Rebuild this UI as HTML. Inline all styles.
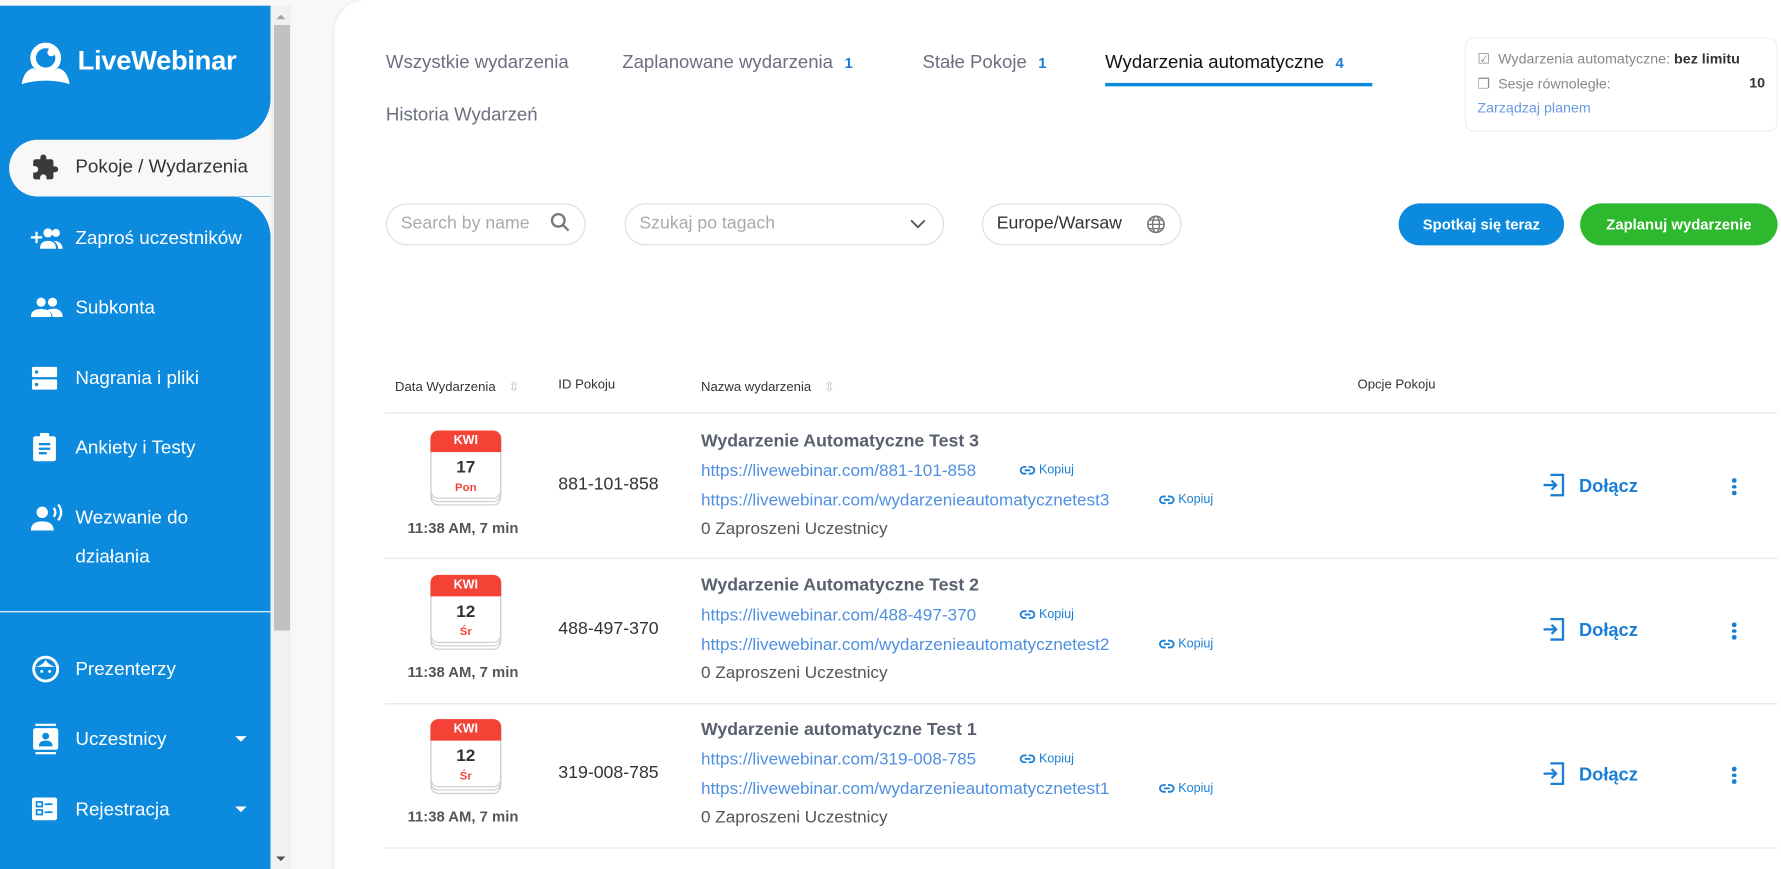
<!DOCTYPE html>
<html><head><meta charset="utf-8"><style>
*{box-sizing:border-box;margin:0;padding:0;white-space:nowrap}
html,body{width:1781px;height:869px;overflow:hidden;background:#f8f8f8;font-family:"Liberation Sans",sans-serif}
#w{position:absolute;left:0;top:0;width:1560px;height:765px;transform:scale(1.1417,1.136);transform-origin:0 0;background:#f8f8f8}
.a{position:absolute}
.sb{position:absolute;left:0;top:5px;width:237px;height:760px;background:#0b8ade}
.ni{position:absolute;left:66px;color:#fff;font-size:16.5px}
.ic{position:absolute;left:27px}
.tab{position:absolute;top:46px;font-size:16.3px;color:#6b6f80}
.cnt{color:#1a7fd4;font-size:13px;font-weight:bold;margin-left:10px}
.pill{position:absolute;top:179px;height:37px;border:1px solid #ddd;border-radius:19px;background:#fff;font-size:15.5px;color:#aaa;padding:8px 12px}
.btn{position:absolute;top:179px;height:37px;border-radius:19px;color:#fff;font-weight:bold;font-size:13px;text-align:center;line-height:37px}
.th{position:absolute;top:333px;font-size:11.5px;color:#333}
.hr{position:absolute;left:337px;width:1220px;height:1px;background:#e6e6e6}
.row{position:absolute;left:0;width:1560px;height:127px}
.cal{position:absolute;left:377px;top:379px;width:62px;height:66px}
.cal .p{position:absolute;left:0;width:62px;height:60px;border:1px solid #ccc;border-radius:7px;background:#fff}
.cal .h{position:absolute;left:0;top:0;width:62px;height:19px;background:#f44336;border-radius:7px 7px 0 0;color:#fff;font-size:11px;font-weight:bold;text-align:center;line-height:19px}
.cal .d{position:absolute;top:24px;width:62px;text-align:center;font-size:15px;font-weight:bold;color:#333}
.cal .wd{position:absolute;top:45px;width:62px;text-align:center;font-size:10px;font-weight:bold;color:#f44336}
.tm{position:absolute;left:357px;top:457px;font-size:13px;font-weight:bold;color:#555}
.id{position:absolute;left:489px;top:418px;font-size:15.5px;color:#333}
.nm{position:absolute;left:614px;top:380px;font-size:15.5px;font-weight:bold;color:#5a6070}
.ln{position:absolute;left:614px;font-size:15px;color:#4f8fe0}
.kp{position:absolute;font-size:11px;color:#1a7fd4}
.kp svg{vertical-align:-2px;margin-right:3px}
.inv{position:absolute;left:614px;top:457px;font-size:15px;color:#555}
.dj{position:absolute;left:1350px;top:416px;font-size:16px;font-weight:bold;color:#1a7fd4}
.dj svg{vertical-align:-5px;margin-right:11px}
.kb{position:absolute;left:1517px;top:421px;width:4px}
.kb i{display:block;width:3.5px;height:3.5px;border-radius:50%;background:#1a7fd4;margin-bottom:2px}
</style></head><body><div id="w">
<div class="sb"></div>
<div class="a" style="left:8px;top:123px;width:200px;height:50px;background:#f8f8f8;border-radius:25px 0 0 25px"></div>
<svg class="a" style="left:190px;top:85px" width="48" height="126" viewBox="0 0 48 126"><path fill="#f8f8f8" d="M0 38H48V88H0Z M10 38.5A37 37 0 0 0 47 1.5L48 1.5L48 38.5Z M10 87.5A37 37 0 0 1 47 124.5L48 124.5L48 87.5Z"/></svg>
<svg class="a" style="left:17px;top:36px" width="52" height="40" viewBox="0 0 52 40"><circle cx="23" cy="15" r="11" fill="none" stroke="#fff" stroke-width="5"/><circle cx="28" cy="10" r="3.5" fill="#fff"/><path d="M2 38 Q4 26 12 24 Q23 32 34 24 Q42 26 44 38 Q23 32 2 38Z" fill="#fff"/></svg>
<div class="a" style="left:68px;top:40px;color:#fff;font-size:24px;font-weight:bold;letter-spacing:-0.3px">LiveWebinar</div>
<svg class="ic" style="top:135px" width="25" height="25" viewBox="0 0 24 24"><path fill="#3a3a3a" d="M20.5 11H19V7c0-1.1-.9-2-2-2h-4V3.5a2.5 2.5 0 0 0-5 0V5H4c-1.1 0-2 .9-2 2v3.8h1.5a2.7 2.7 0 0 1 0 5.4H2V20c0 1.1.9 2 2 2h3.8v-1.5a2.7 2.7 0 0 1 5.4 0V22H17c1.1 0 2-.9 2-2v-4h1.5a2.5 2.5 0 0 0 0-5z"/></svg>
<div class="a" style="left:66px;top:138px;font-size:16.5px;color:#333">Pokoje / Wydarzenia</div>
<svg class="ic" style="top:199px" width="28" height="22" viewBox="0 0 28 22"><path fill="#fff" d="M0 9h4V5h2v4h4v2H6v4H4v-4H0z"/><circle cx="15" cy="6" r="4" fill="#fff"/><circle cx="22" cy="6" r="3.5" fill="#fff"/><path fill="#fff" d="M8 20q0-7 7-7t7 7zM20 13q7 0 8 7h-4q0-4-4-7z"/></svg>
<div class="ni" style="top:201px">Zaproś uczestników</div>
<svg class="ic" style="top:261px" width="28" height="20" viewBox="0 0 28 20"><circle cx="9" cy="5" r="4" fill="#fff"/><circle cx="19" cy="5" r="4" fill="#fff"/><path fill="#fff" d="M0 18q0-7 9-7t9 7zM14 12q5-2 9-1 5 2 5 7h-9q0-4-5-6z"/></svg>
<div class="ni" style="top:262px">Subkonta</div>
<svg class="ic" style="top:322px" width="24" height="22" viewBox="0 0 24 22"><rect x="1" y="1" width="22" height="9" rx="1" fill="#fff"/><rect x="1" y="12" width="22" height="9" rx="1" fill="#fff"/><circle cx="5" cy="5.5" r="1.5" fill="#0b8ade"/><circle cx="5" cy="16.5" r="1.5" fill="#0b8ade"/></svg>
<div class="ni" style="top:324px">Nagrania i pliki</div>
<svg class="ic" style="top:381px" width="24" height="26" viewBox="0 0 24 26"><rect x="2" y="3" width="20" height="22" rx="2" fill="#fff"/><rect x="8" y="0" width="8" height="5" rx="1" fill="#fff"/><path d="M7 10h10M7 14h10M7 18h7" stroke="#0b8ade" stroke-width="2"/></svg>
<div class="ni" style="top:385px">Ankiety i Testy</div>
<svg class="ic" style="top:444px" width="28" height="24" viewBox="0 0 28 24"><circle cx="10" cy="7" r="5" fill="#fff"/><path fill="#fff" d="M0 23q0-8 10-8t10 8z"/><path d="M20 3q3 4 0 8M24 0q5 7 0 14" stroke="#fff" stroke-width="2" fill="none"/></svg>
<div class="ni" style="top:447px">Wezwanie do</div>
<div class="ni" style="top:481px">działania</div>
<div class="a" style="left:0;top:538px;width:237px;height:1px;background:#fff"></div>
<svg class="ic" style="top:577px" width="26" height="24" viewBox="0 0 26 24"><circle cx="13" cy="12" r="10.5" fill="none" stroke="#fff" stroke-width="2.5"/><path d="M4 10q6-1 9-6 3 5 9 6" fill="#fff"/><circle cx="9.5" cy="14" r="1.3" fill="#fff"/><circle cx="16.5" cy="14" r="1.3" fill="#fff"/></svg>
<div class="ni" style="top:580px">Prezenterzy</div>
<svg class="ic" style="top:637px" width="26" height="28" viewBox="0 0 26 28"><rect x="2" y="4" width="22" height="19" rx="2" fill="#fff"/><rect x="4" y="0" width="18" height="2" fill="#fff"/><rect x="4" y="25" width="18" height="2" fill="#fff"/><circle cx="13" cy="11" r="3" fill="#0b8ade"/><path d="M7 20q0-5 6-5t6 5z" fill="#0b8ade"/></svg>
<div class="ni" style="top:642px">Uczestnicy</div>
<div class="a" style="left:206px;top:648px;border:5px solid transparent;border-top:5px solid #fff"></div>
<svg class="ic" style="top:701px" width="24" height="22" viewBox="0 0 24 22"><rect x="1" y="1" width="22" height="20" rx="2" fill="#fff"/><rect x="5" y="5" width="5" height="4" fill="none" stroke="#0b8ade" stroke-width="1.5"/><rect x="5" y="12" width="5" height="4" fill="none" stroke="#0b8ade" stroke-width="1.5"/><path d="M12 7h7M12 14h7" stroke="#0b8ade" stroke-width="1.5"/></svg>
<div class="ni" style="top:704px">Rejestracja</div>
<div class="a" style="left:206px;top:710px;border:5px solid transparent;border-top:5px solid #fff"></div>
<div class="a" style="left:237px;top:5px;width:18px;height:760px;background:#f1f1f1"></div>
<div class="a" style="left:240px;top:22px;width:14px;height:533px;background:#c1c1c1"></div>
<div class="a" style="left:242px;top:9px;border:4px solid transparent;border-bottom:4px solid #a3a3a3"></div>
<div class="a" style="left:242px;top:754px;border:4px solid transparent;border-top:4px solid #505050"></div>
<div class="a" style="left:293px;top:0;width:1267px;height:765px;background:#fff;border-radius:28px 0 0 0;box-shadow:-1px 0 3px rgba(0,0,0,.06)"></div>
<div class="tab" style="left:338px">Wszystkie wydarzenia</div>
<div class="tab" style="left:545px">Zaplanowane wydarzenia<span class="cnt">1</span></div>
<div class="tab" style="left:808px">Stałe Pokoje<span class="cnt">1</span></div>
<div class="tab" style="left:968px;color:#111">Wydarzenia automatyczne<span class="cnt">4</span></div>
<div class="a" style="left:968px;top:73px;width:234px;height:3px;background:#0b8ade"></div>
<div class="tab" style="left:338px;top:92px">Historia Wydarzeń</div>
<div class="a" style="left:1283px;top:33px;width:274px;height:83px;border:1px solid #eee;border-radius:8px;font-size:12.5px;color:#888">
<div class="a" style="left:10px;top:10px">☑&nbsp; Wydarzenia automatyczne: <b style="color:#333">bez limitu</b></div>
<div class="a" style="left:10px;top:32px">❐&nbsp; Sesje równoległe:</div>
<div class="a" style="right:10px;top:32px;color:#333;font-weight:bold">10</div>
<div class="a" style="left:10px;top:54px;color:#6a9be0">Zarządzaj planem</div></div>
<div class="pill" style="left:338px;width:175px">Search by name</div>
<svg class="a" style="left:482px;top:187px" width="18" height="18" viewBox="0 0 18 18"><circle cx="7" cy="7" r="5.5" fill="none" stroke="#777" stroke-width="2"/><path d="M11 11l5 5" stroke="#777" stroke-width="2"/></svg>
<div class="pill" style="left:547px;width:280px">Szukaj po tagach</div>
<svg class="a" style="left:797px;top:192px" width="14" height="10" viewBox="0 0 14 10"><path d="M1 2l6 6 6-6" stroke="#555" stroke-width="1.6" fill="none"/></svg>
<div class="pill" style="left:860px;width:175px;color:#333">Europe/Warsaw</div>
<svg class="a" style="left:1004px;top:189px" width="17" height="17" viewBox="0 0 18 18"><circle cx="9" cy="9" r="7.5" fill="none" stroke="#777" stroke-width="1.5"/><ellipse cx="9" cy="9" rx="3.2" ry="7.5" fill="none" stroke="#777" stroke-width="1.3"/><path d="M1.5 9h15M3 5h12M3 13h12" stroke="#777" stroke-width="1.2"/></svg>
<div class="btn" style="left:1225px;width:145px;background:#0b8ade">Spotkaj się teraz</div>
<div class="btn" style="left:1384px;width:173px;background:#2eb82e">Zaplanuj wydarzenie</div>
<div class="th" style="left:346px">Data Wydarzenia <span style="color:#bbb;margin-left:8px">⇳</span></div>
<div class="th" style="left:489px">ID Pokoju</div>
<div class="th" style="left:614px">Nazwa wydarzenia <span style="color:#bbb;margin-left:8px">⇳</span></div>
<div class="th" style="left:1189px">Opcje Pokoju</div>
<div class="hr" style="top:363px"></div>
<div class="hr" style="top:491px"></div>
<div class="hr" style="top:619px"></div>
<div class="hr" style="top:746px"></div>

<div class="row" style="top:0">
<div class="cal"><div class="p" style="top:6px"></div><div class="p" style="top:3px"></div><div class="p" style="top:0"></div><div class="h">KWI</div><div class="d">17</div><div class="wd">Pon</div></div>
<div class="tm">11:38 AM, 7 min</div>
<div class="id">881-101-858</div>
<div class="nm">Wydarzenie Automatyczne Test 3</div>
<div class="ln" style="top:406px">https://livewebinar.com/881-101-858</div>
<div class="kp" style="left:893px;top:408px"><svg width="14" height="10" viewBox="0 0 14 10"><path d="M6 2H4a3 3 0 0 0 0 6h2M8 2h2a3 3 0 0 1 0 6H8M4.5 5h5" stroke="#1a7fd4" stroke-width="1.6" fill="none"/></svg>Kopiuj</div>
<div class="ln" style="top:432px">https://livewebinar.com/wydarzenieautomatycznetest3</div>
<div class="kp" style="left:1015px;top:434px"><svg width="14" height="10" viewBox="0 0 14 10"><path d="M6 2H4a3 3 0 0 0 0 6h2M8 2h2a3 3 0 0 1 0 6H8M4.5 5h5" stroke="#1a7fd4" stroke-width="1.6" fill="none"/></svg>Kopiuj</div>
<div class="inv">0 Zaproszeni Uczestnicy</div>
<div class="dj"><svg width="22" height="22" viewBox="0 0 22 22"><path d="M8 2h11v18H8M2 11h11M9 7l4 4-4 4" stroke="#1a7fd4" stroke-width="2" fill="none"/></svg>Dołącz</div>
<div class="kb"><i></i><i></i><i></i></div>
</div>
<div class="row" style="top:127px">
<div class="cal"><div class="p" style="top:6px"></div><div class="p" style="top:3px"></div><div class="p" style="top:0"></div><div class="h">KWI</div><div class="d">12</div><div class="wd">Śr</div></div>
<div class="tm">11:38 AM, 7 min</div>
<div class="id">488-497-370</div>
<div class="nm">Wydarzenie Automatyczne Test 2</div>
<div class="ln" style="top:406px">https://livewebinar.com/488-497-370</div>
<div class="kp" style="left:893px;top:408px"><svg width="14" height="10" viewBox="0 0 14 10"><path d="M6 2H4a3 3 0 0 0 0 6h2M8 2h2a3 3 0 0 1 0 6H8M4.5 5h5" stroke="#1a7fd4" stroke-width="1.6" fill="none"/></svg>Kopiuj</div>
<div class="ln" style="top:432px">https://livewebinar.com/wydarzenieautomatycznetest2</div>
<div class="kp" style="left:1015px;top:434px"><svg width="14" height="10" viewBox="0 0 14 10"><path d="M6 2H4a3 3 0 0 0 0 6h2M8 2h2a3 3 0 0 1 0 6H8M4.5 5h5" stroke="#1a7fd4" stroke-width="1.6" fill="none"/></svg>Kopiuj</div>
<div class="inv">0 Zaproszeni Uczestnicy</div>
<div class="dj"><svg width="22" height="22" viewBox="0 0 22 22"><path d="M8 2h11v18H8M2 11h11M9 7l4 4-4 4" stroke="#1a7fd4" stroke-width="2" fill="none"/></svg>Dołącz</div>
<div class="kb"><i></i><i></i><i></i></div>
</div>
<div class="row" style="top:254px">
<div class="cal"><div class="p" style="top:6px"></div><div class="p" style="top:3px"></div><div class="p" style="top:0"></div><div class="h">KWI</div><div class="d">12</div><div class="wd">Śr</div></div>
<div class="tm">11:38 AM, 7 min</div>
<div class="id">319-008-785</div>
<div class="nm">Wydarzenie automatyczne Test 1</div>
<div class="ln" style="top:406px">https://livewebinar.com/319-008-785</div>
<div class="kp" style="left:893px;top:408px"><svg width="14" height="10" viewBox="0 0 14 10"><path d="M6 2H4a3 3 0 0 0 0 6h2M8 2h2a3 3 0 0 1 0 6H8M4.5 5h5" stroke="#1a7fd4" stroke-width="1.6" fill="none"/></svg>Kopiuj</div>
<div class="ln" style="top:432px">https://livewebinar.com/wydarzenieautomatycznetest1</div>
<div class="kp" style="left:1015px;top:434px"><svg width="14" height="10" viewBox="0 0 14 10"><path d="M6 2H4a3 3 0 0 0 0 6h2M8 2h2a3 3 0 0 1 0 6H8M4.5 5h5" stroke="#1a7fd4" stroke-width="1.6" fill="none"/></svg>Kopiuj</div>
<div class="inv">0 Zaproszeni Uczestnicy</div>
<div class="dj"><svg width="22" height="22" viewBox="0 0 22 22"><path d="M8 2h11v18H8M2 11h11M9 7l4 4-4 4" stroke="#1a7fd4" stroke-width="2" fill="none"/></svg>Dołącz</div>
<div class="kb"><i></i><i></i><i></i></div>
</div>
</div></body></html>
